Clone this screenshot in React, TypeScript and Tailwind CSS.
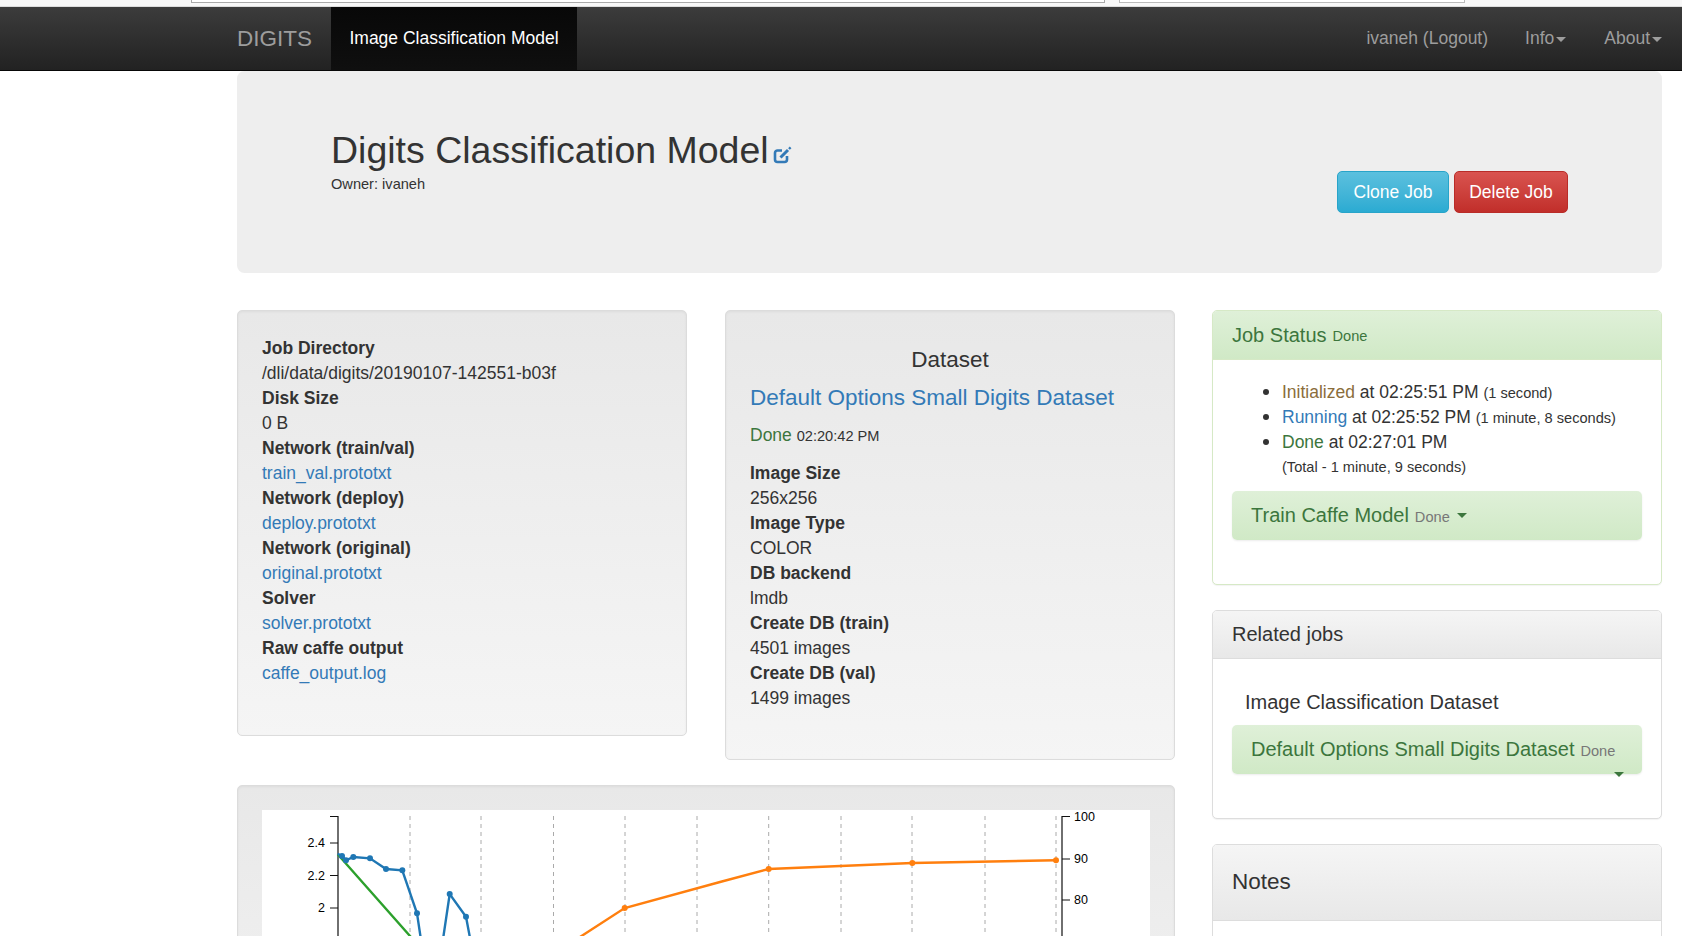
const Label = ({ children }: { children: string }) => (
  <div className="font-bold">{children}</div>
);

const Link = ({ children }: { children: string }) => (
  <div className="text-[#337ab7]">{children}</div>
);

const Caret = () => (
  <span className="inline-block w-0 h-0 border-x-[5px] border-x-transparent border-t-[5px] border-t-[#9d9d9d] ml-[2px] align-middle" />
);

const EditIcon = () => (
  <svg width="19" height="18" viewBox="0 0 19 18" className="ml-[4px] mb-[11px] text-[#337ab7]" fill="none" stroke="currentColor">
    <path d="M9 4.5H4.5a2.5 2.5 0 0 0-2.5 2.5v6.5a2.5 2.5 0 0 0 2.5 2.5h7a2.5 2.5 0 0 0 2.5-2.5V10" strokeWidth="2.6" />
    <path d="M7.5 11.5 15 4" strokeWidth="3" />
    <path d="M16 3 17.6 1.4" strokeWidth="2.4" />
  </svg>
);

const wellClass =
  'rounded-[5px] border border-[#dcdcdc] bg-gradient-to-b from-[#e8e8e8] to-[#f5f5f5] shadow-[inset_0_1px_3px_rgba(0,0,0,0.05)]';

const gridX = [148, 219, 291.5, 363, 435, 506.7, 579, 650, 723, 794];

// chart is a picture, coordinates are from the reference
const Chart = () => (
  <svg width="888" height="300" className="block bg-white" style={{ fontFamily: '"Liberation Sans", sans-serif' }}>
    {gridX.map((x) => (
      <line key={x} x1={x} y1={6} x2={x} y2={300} stroke="#aaa" strokeWidth={1} strokeDasharray="4 4" />
    ))}
    <path d="M68 6.5H76V300M800 300V6.5H808" fill="none" stroke="#111" strokeWidth={1.2} />
    {[33, 65.5, 98, 130.5].map((y) => (
      <line key={y} x1={68} y1={y} x2={76} y2={y} stroke="#111" />
    ))}
    {[49, 90].map((y) => (
      <line key={y} x1={800} y1={y} x2={808} y2={y} stroke="#111" />
    ))}
    {[['2.4', 33], ['2.2', 65.5], ['2', 98], ['1.8', 130.5]].map(([t, y]) => (
      <text key={t} x={63} y={Number(y) + 4} textAnchor="end" fontSize={12.5} fill="#000">{t}</text>
    ))}
    {[['100', 6.5], ['90', 49], ['80', 90]].map(([t, y]) => (
      <text key={t} x={812} y={Number(y) + 4} fontSize={12.5} fill="#000">{t}</text>
    ))}
    <polyline points="75.7,44.3 148,126 210,196" fill="none" stroke="#2ca02c" strokeWidth={2.4} />
    <polyline
      points="75.7,43.7 80,46 84,50.3 91.3,47 108,48.3 124,59 140.3,60.3 155,103.3 165,170 175,170 187.7,84 204,106.7 215,165"
      fill="none"
      stroke="#1f77b4"
      strokeWidth={2.4}
    />
    {[[80, 46], [84, 50.3], [91.3, 47], [108, 48.3], [124, 59], [140.3, 60.3], [155, 103.3], [187.7, 84], [204, 106.7]].map(([x, y]) => (
      <circle key={x} cx={x} cy={y} r={3} fill="#1f77b4" />
    ))}
    <polyline
      points="290,148 318,127 362.7,98 458,72 506.7,59 650.3,53 794,50.3"
      fill="none"
      stroke="#ff7f0e"
      strokeWidth={2.4}
    />
    {[[362.7, 98], [506.7, 59], [650.3, 53], [794, 50.3]].map(([x, y]) => (
      <circle key={x} cx={x} cy={y} r={3} fill="#ff7f0e" />
    ))}
  </svg>
);

export default function App() {
  return (
    <div className="h-[936px] overflow-hidden bg-white text-[#333] text-[17.5px] leading-[25px] font-['Liberation_Sans',Arial,sans-serif]">
      {/* browser chrome remnant */}
      <div className="h-[7px] bg-[#f8f8f8] border-b border-[#ddd] flex items-start pl-[191px] gap-[14px]">
        <div className="w-[914px] h-[3px] bg-white border-x border-b border-[#aaa]" />
        <div className="w-[346px] h-[3px] bg-white border-x border-b border-[#bbb]" />
      </div>

      <nav className="h-[64px] flex items-stretch pl-[237px] bg-gradient-to-b from-[#3c3c3c] to-[#222] border-b border-[#080808] text-[#9d9d9d]">
        <div className="w-[94px] flex items-center text-[22.5px]">DIGITS</div>
        <div className="w-[246px] flex items-center justify-center text-white bg-gradient-to-b from-[#080808] to-[#0f0f0f]">
          Image Classification Model
        </div>
        <div className="ml-auto flex items-center pr-[20px]">
          <span>ivaneh (Logout)</span>
          <span className="ml-[37px]">Info<Caret /></span>
          <span className="ml-[38px]">About<Caret /></span>
        </div>
      </nav>

      <div className="ml-[237px] mr-[20px] h-[202px] rounded-[7.5px] bg-[#eee] flex justify-between pl-[94px] pr-[94px]">
        <div className="pt-[54px]">
          <h1 className="flex items-end text-[37.5px] leading-[50px]">
            Digits Classification Model
            <EditIcon />
          </h1>
          <div className="text-[14.6px] leading-[20px] mt-[-1px]">Owner: ivaneh</div>
        </div>
        <div className="pt-[100px] flex gap-[5px] items-start">
          <button className="h-[42px] w-[112px] rounded-[5px] border border-[#28a4c9] bg-gradient-to-b from-[#5bc0de] to-[#2aabd2] text-white">
            Clone Job
          </button>
          <button className="h-[42px] w-[114px] rounded-[5px] border border-[#b92c28] bg-gradient-to-b from-[#d9534f] to-[#c12e2a] text-white">
            Delete Job
          </button>
        </div>
      </div>

      <div className="mt-[37px] ml-[237px] mr-[20px] flex gap-[37px] items-start">
        <div className="w-[938px] grid grid-cols-[450px_450px] gap-x-[38px] gap-y-[25px] items-start">
          <div className={`${wellClass} px-[24px] pt-[25px] h-[426px]`}>
            <Label>Job Directory</Label>
            <div>/dli/data/digits/20190107-142551-b03f</div>
            <Label>Disk Size</Label>
            <div>0 B</div>
            <Label>Network (train/val)</Label>
            <Link>train_val.prototxt</Link>
            <Label>Network (deploy)</Label>
            <Link>deploy.prototxt</Link>
            <Label>Network (original)</Label>
            <Link>original.prototxt</Link>
            <Label>Solver</Label>
            <Link>solver.prototxt</Link>
            <Label>Raw caffe output</Label>
            <Link>caffe_output.log</Link>
          </div>

          <div className={`${wellClass} px-[24px] pt-[25px] h-[450px]`}>
            <div className="text-center text-[22.5px] leading-[48px]">Dataset</div>
            <div className="text-[#337ab7] text-[22.5px] leading-[28px]">Default Options Small Digits Dataset</div>
            <div className="mt-[11px] leading-[25px]">
              <span className="text-[#3c763d]">Done</span> <span className="text-[14.6px]">02:20:42 PM</span>
            </div>
            <div className="mt-[12px]">
              <Label>Image Size</Label>
              <div>256x256</div>
              <Label>Image Type</Label>
              <div>COLOR</div>
              <Label>DB backend</Label>
              <div>lmdb</div>
              <Label>Create DB (train)</Label>
              <div>4501 images</div>
              <Label>Create DB (val)</Label>
              <div>1499 images</div>
            </div>
          </div>

          <div className={`${wellClass} col-span-2 px-[24px] pt-[24px] pb-[24px]`}>
            <Chart />
          </div>
        </div>

        <div className="w-[450px] flex flex-col gap-[25px]">
          <div className="h-[275px] rounded-[5px] border border-[#d6e9c6] bg-white shadow-[0_1px_1px_rgba(0,0,0,0.05)] overflow-hidden">
            <div className="h-[49px] flex items-center gap-[6px] px-[19px] bg-gradient-to-b from-[#dff0d8] to-[#d0e9c6] border-b border-[#d6e9c6] text-[#3c763d] text-[20px]">
              Job Status <span className="text-[14.6px] mt-[3px]">Done</span>
            </div>
            <div className="px-[19px] pt-[19px]">
              <ul className="list-disc pl-[50px] marker:text-[#333] marker:text-[20px]">
                <li className="h-[25px]">
                  <span className="text-[#8a6d3b]">Initialized</span> at 02:25:51 PM <span className="text-[14.6px]">(1 second)</span>
                </li>
                <li className="h-[25px]">
                  <span className="text-[#337ab7]">Running</span> at 02:25:52 PM <span className="text-[14.6px]">(1 minute, 8 seconds)</span>
                </li>
                <li className="h-[25px]">
                  <span className="text-[#3c763d]">Done</span> at 02:27:01 PM
                </li>
                <li className="list-none text-[14.6px] leading-[25px] mt-[1px]">(Total - 1 minute, 9 seconds)</li>
              </ul>
              <div className="mt-[11px] h-[49px] rounded-[5px] px-[19px] flex items-center gap-[6px] bg-gradient-to-b from-[#dff0d8] to-[#d0e9c6] shadow-[0_1px_2px_rgba(0,0,0,0.08)] text-[#3c763d] text-[20px]">
                Train Caffe Model <span className="text-[14.6px] text-[#777] mt-[3px]">Done</span>
                <span className="ml-[1px] w-0 h-0 border-x-[5px] border-x-transparent border-t-[5px] border-t-[#3c763d]" />
              </div>
            </div>
          </div>

          <div className="h-[209px] rounded-[5px] border border-[#ddd] bg-white shadow-[0_1px_1px_rgba(0,0,0,0.05)] overflow-hidden">
            <div className="h-[48px] flex items-center px-[19px] bg-gradient-to-b from-[#f5f5f5] to-[#e8e8e8] border-b border-[#ddd] text-[20px]">
              Related jobs
            </div>
            <div className="px-[19px] pt-[31px]">
              <div className="pl-[13px] text-[20px] leading-[25px]">Image Classification Dataset</div>
              <div className="relative mt-[10px] h-[49px] rounded-[5px] px-[19px] flex items-center gap-[6px] bg-gradient-to-b from-[#dff0d8] to-[#d0e9c6] shadow-[0_1px_2px_rgba(0,0,0,0.08)] text-[#3c763d] text-[20px]">
                Default Options Small Digits Dataset <span className="text-[14.6px] text-[#777] mt-[3px]">Done</span>
                <span className="absolute right-[18px] bottom-[-3px] w-0 h-0 border-x-[5px] border-x-transparent border-t-[5px] border-t-[#3c763d]" />
              </div>
            </div>
          </div>

          <div className="h-[120px] rounded-[5px] border border-[#ddd] bg-white overflow-hidden">
            <div className="h-[76px] flex items-center pb-[3px] px-[19px] bg-gradient-to-b from-[#f5f5f5] to-[#e8e8e8] border-b border-[#ddd] text-[22.5px]">
              Notes
            </div>
          </div>
        </div>
      </div>
    </div>
  );
}
